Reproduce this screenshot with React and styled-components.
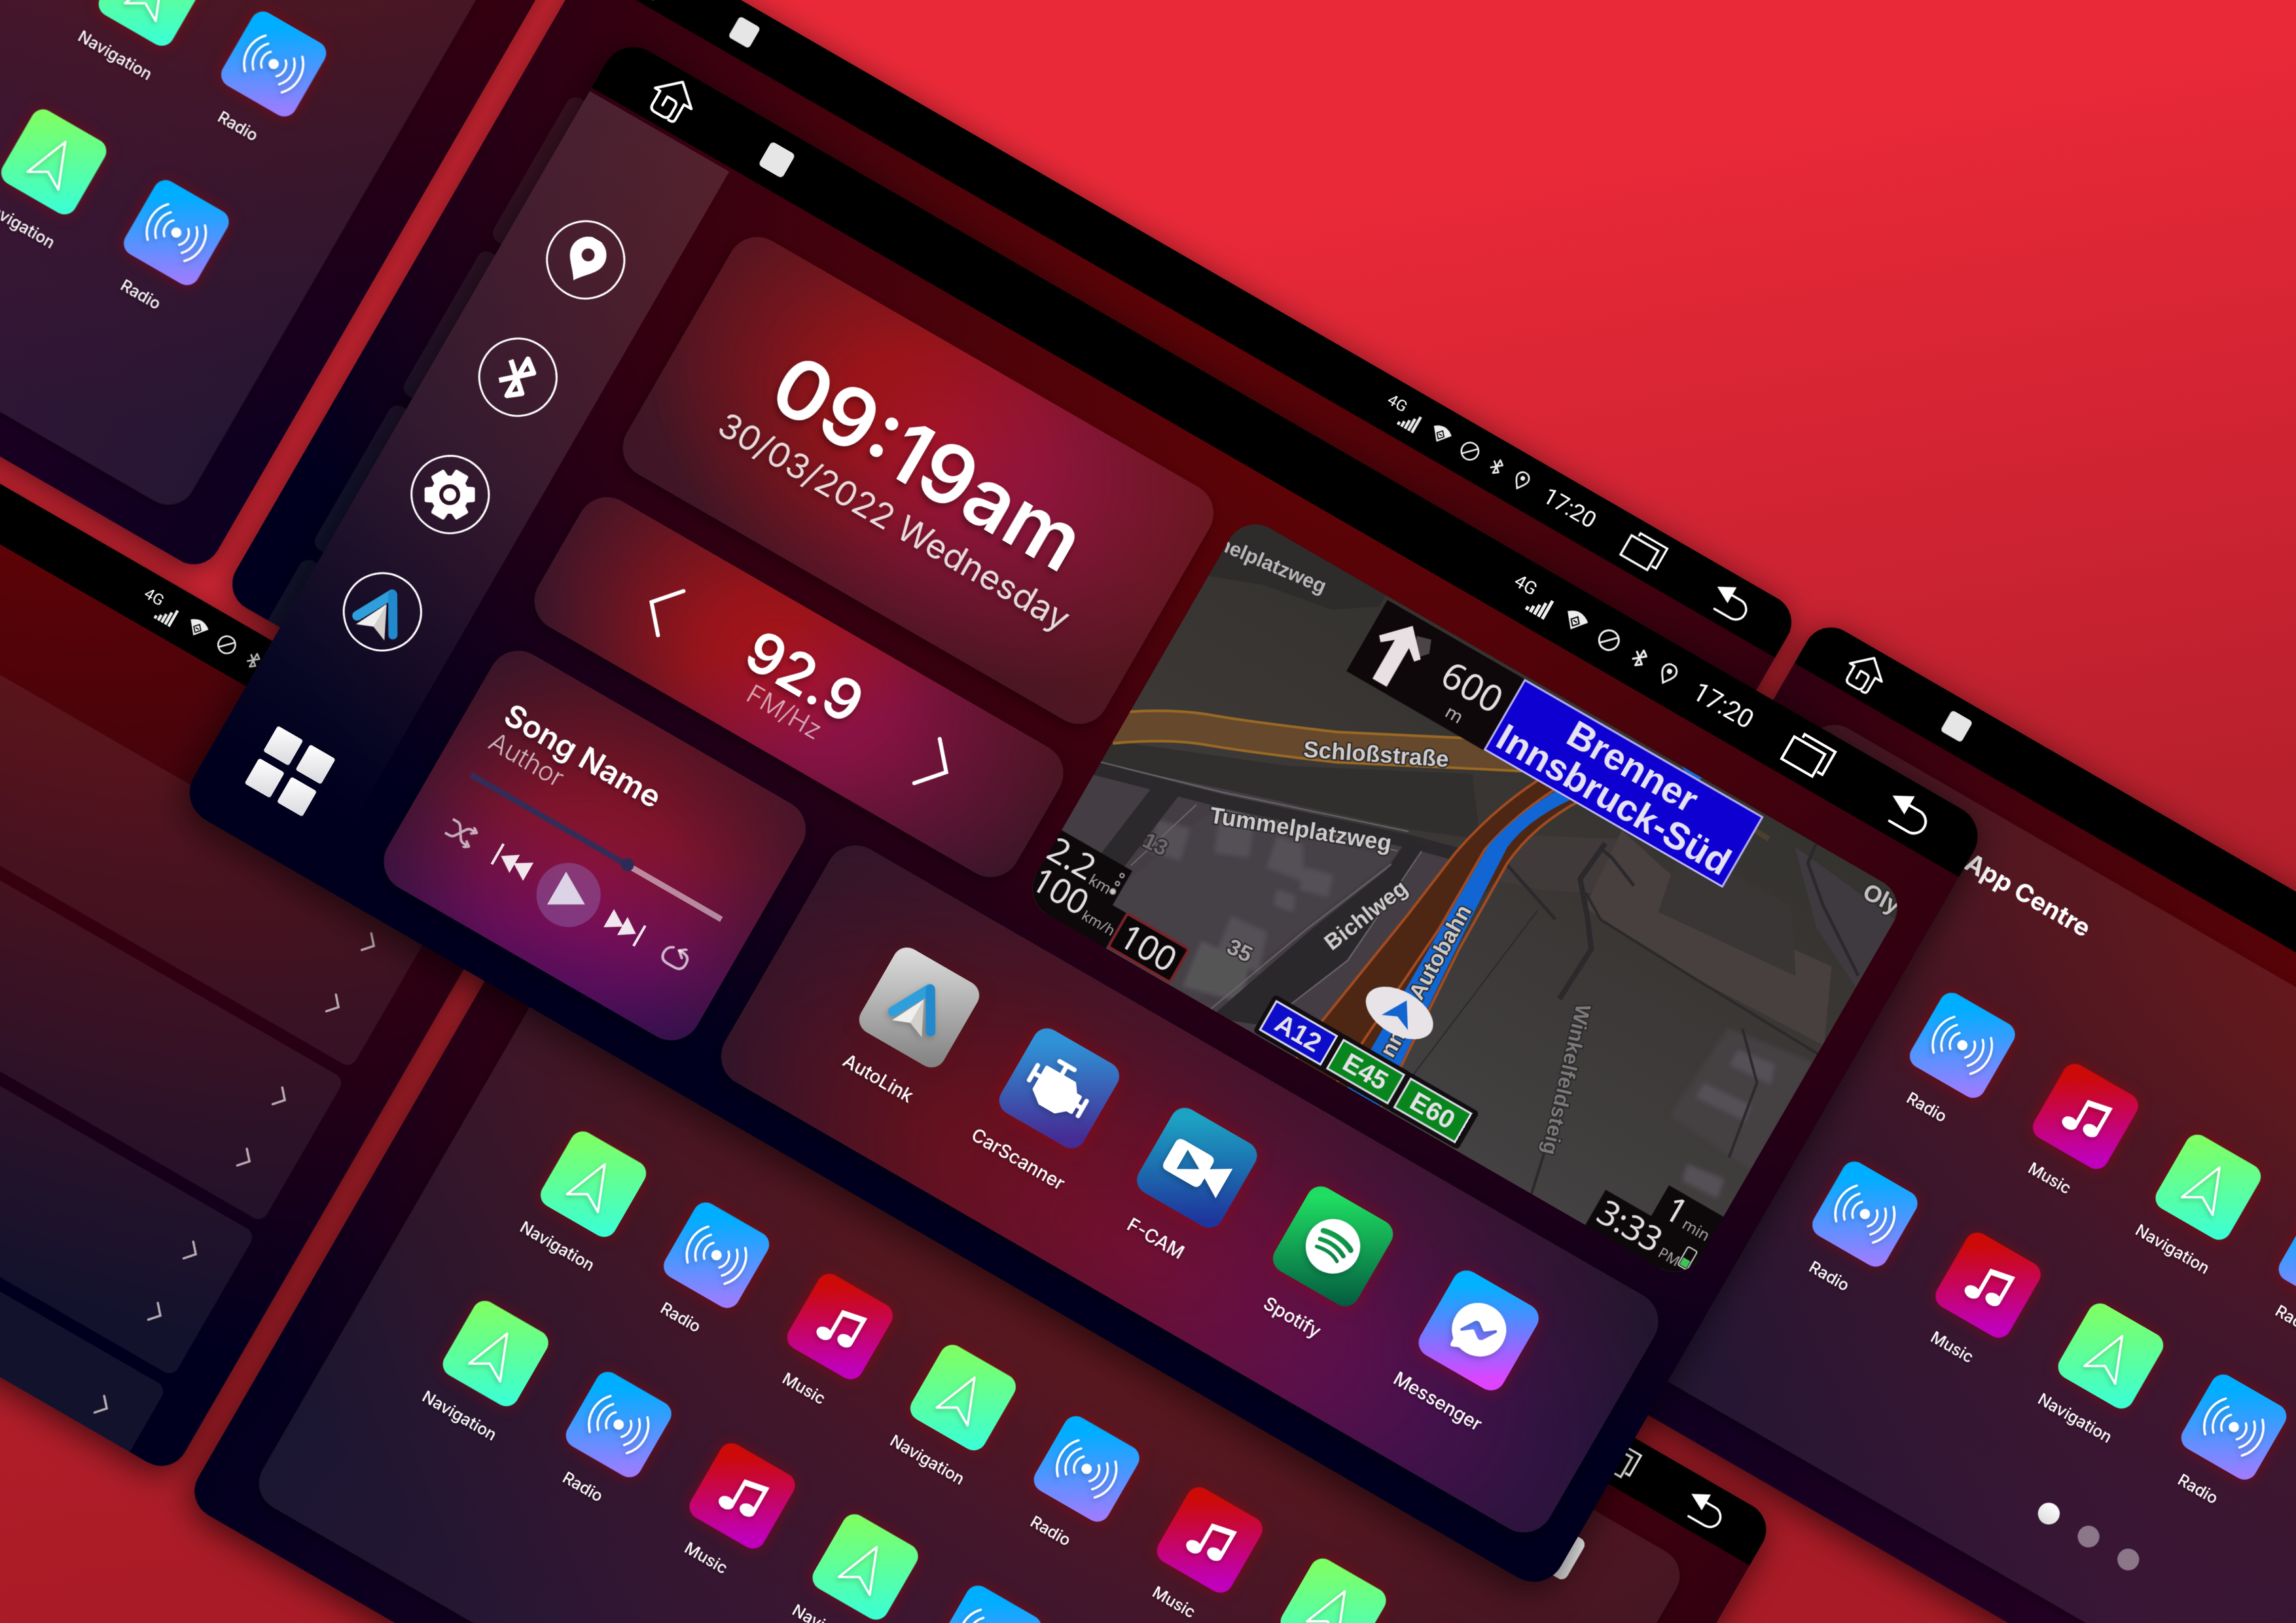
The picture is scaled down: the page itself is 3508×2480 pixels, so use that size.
import React, { useState } from "react";
import styled, { createGlobalStyle, css } from "styled-components";
import { FaSpotify, FaFacebookMessenger } from "react-icons/fa";

const GlobalStyle = createGlobalStyle`
  *, *::before, *::after { box-sizing: border-box; }
  body { margin: 0; background: #a91b26; }
  button { border: 0; padding: 0; background: none; color: inherit; font: inherit; cursor: pointer; }
  h1, h2, p, ul { margin: 0; padding: 0; list-style: none; font: inherit; }
  svg { display: block; }
`;

/* ---------- stage ---------- */

const Page = styled.main`
  position: relative;
  width: 100%;
  min-height: 100vh;
  overflow: hidden;
  background: linear-gradient(170deg, #ea2938 20%, #ce2332 43%, #b8202c 58%, #a91b26 80%);
  font-family: Inter, "Open Sans", sans-serif;
  color: #fff;
`;

const Stage = styled.div`
  position: absolute;
  top: 0;
  left: 0;
  transform: rotate(30deg);
  transform-origin: 0 0;
`;

const Device = styled.section`
  position: absolute;
  left: ${(p) => p.$x}px;
  top: ${(p) => p.$y}px;
  width: 2412px;
  height: 1356px;
  transform: scale(${(p) => p.$scale || 1});
  transform-origin: 0 0;
  display: flex;
  flex-direction: column;
  overflow: hidden;
  border-radius: 48px;
  background: ${(p) =>
      p.$violet
        ? "radial-gradient(ellipse 62% 66% at 58% 92%, rgba(54, 0, 36, 0.72), rgba(54, 0, 36, 0.4) 50%, transparent),"
        : ""}
    radial-gradient(ellipse 96% 100% at 52% 0%, #620304 0%, #4c030a 26%, #340010 50%, #200017 68%, #00001e 96%);
  box-shadow: 0 12px 56px rgba(0, 0, 0, 0.62);
`;

/* ---------- status bar ---------- */

const Bar = styled.header`
  flex: none;
  height: 92px;
  padding: 0 82px 0 80px;
  display: flex;
  align-items: center;
  background: #000;
`;

const BarSquare = styled.button`
  width: 42px;
  height: 42px;
  margin-left: 127px;
  border-radius: 6px;
  background: #e6e6e6;
`;

const Indicators = styled.div`
  margin-left: auto;
  display: flex;
  align-items: center;
  gap: 24px;
`;

const Signal = styled.div`
  display: flex;
  align-items: flex-end;
`;

const Network = styled.span`
  font: 28px/28px Roboto, sans-serif;
  padding-bottom: 18px;
`;

const Time = styled.time`
  padding-left: 10px;
  font: 40px/46px Roboto, sans-serif;
`;

const Recents = styled.button`
  margin-left: 66px;
`;

const Back = styled.button`
  margin-left: 107px;
`;

function StatusBar() {
  return (
    <Bar>
      <button aria-label="Home">
        <svg width="72" height="68" viewBox="0 0 72 68" fill="none" stroke="#fff" strokeWidth="4" strokeLinejoin="round" strokeLinecap="round">
          <path d="M46 64h3q6 0 6-6V32h13L36 3 4 32h9v23q0 9 9 9h14q9 0 9-9V41q0-7-7-7H27v15" />
        </svg>
      </button>
      <BarSquare aria-label="Stop" />
      <Indicators>
        <Signal>
          <Network>4G</Network>
          <svg width="34" height="32" viewBox="0 0 34 32" fill="#eee">
            <path d="M0 32v-6h5v6zM7 32V21h5v11zM14 32V15h5v17zM21 32V8h5v24zM28 32V0h5v32z" />
          </svg>
        </Signal>
        <svg width="36" height="30" viewBox="0 0 36 30">
          <path d="M0 8Q18-7 36 8L18 30z" fill="#eee" />
          <path d="M18 8l7 8-7 8-7-8z" fill="none" stroke="#000" strokeWidth="2" />
          <path d="M15 16h6" stroke="#000" strokeWidth="2" />
        </svg>
        <svg width="34" height="34" viewBox="0 0 34 34" fill="none" stroke="#eee" strokeWidth="3">
          <circle cx="17" cy="17" r="15" />
          <path d="M7 27L27 7" />
        </svg>
        <svg width="26" height="30" viewBox="0 0 26 30" fill="none" stroke="#eee" strokeWidth="3" strokeLinejoin="round">
          <path d="M4 8l17 14-8 6V2l8 6L4 22" />
        </svg>
        <svg width="26" height="34" viewBox="0 0 26 34" fill="none" stroke="#eee" strokeWidth="3">
          <path d="M13 32C8 24 2 19 2 12a11 11 0 0 1 22 0c0 7-6 12-11 20z" />
          <circle cx="13" cy="12" r="4" fill="#eee" stroke="none" />
        </svg>
        <Time>17:20</Time>
      </Indicators>
      <Recents aria-label="Recent apps">
        <svg width="70" height="54" viewBox="0 0 70 54" fill="none" stroke="#fff" strokeWidth="4">
          <path d="M2 13h54v39H2zM14 8V2h54v40h-9" />
        </svg>
      </Recents>
      <Back aria-label="Back">
        <svg width="68" height="56" viewBox="0 0 68 56">
          <path d="M28 17h20a18 18 0 0 1 0 36H15" fill="none" stroke="#fff" strokeWidth="4" strokeLinecap="round" />
          <path d="M0 17L30 1v32z" fill="#fff" />
        </svg>
      </Back>
    </Bar>
  );
}

/* ---------- app tiles ---------- */

const TILE_FILLS = {
  navigation: "linear-gradient(150deg, #7dff66 10%, #3cffd2 92%)",
  radio: "linear-gradient(150deg, #00aeff 18%, #9c7dff 92%)",
  music: "linear-gradient(150deg, #cc0a08 15%, #c000ba 88%)",
  autolink: "linear-gradient(150deg, #dcdcdc 5%, #858585 92%)",
  carscanner: "linear-gradient(150deg, #2f92d6 15%, #452c94 88%)",
  fcam: "linear-gradient(150deg, #1ca2c2 12%, #1e369c 90%)",
  spotify: "linear-gradient(150deg, #1fdd62 12%, #045c40 95%)",
  messenger: "linear-gradient(150deg, #00b2ff 15%, #dd44ff 88%)",
};

const Tile = styled.button`
  display: flex;
  flex-direction: column;
  align-items: center;
  gap: 34px;
  font-size: 28px;
  font-weight: 500;
  line-height: 36px;
  text-shadow: 0 2px 4px rgba(0, 0, 0, 0.4);
`;

const TileFace = styled.span`
  width: 146px;
  height: 146px;
  display: grid;
  place-items: center;
  border-radius: 22px;
  background: ${(p) => TILE_FILLS[p.$kind]};
  box-shadow: 0 0 24px ${(p) => (p.$kind === "autolink" ? "rgba(90, 20, 20, 0.4)" : "rgba(180, 0, 0, 0.42)")};
  svg { filter: drop-shadow(0 4px 4px rgba(0, 0, 0, 0.22)); overflow: visible; }
`;

function AutoLinkMark({ size }) {
  return (
    <svg width={size} height={size} viewBox="-45 -45 90 90">
      <path d="M-30 24L0-31" stroke="#2f9fdc" strokeWidth="15" strokeLinecap="round" />
      <path d="M1-31L32 22" stroke="#2189cc" strokeWidth="14" strokeLinecap="round" />
      <path d="M0-14L-25 36 0 26z" fill="#efefee" />
      <path d="M0-14L25 36 0 26z" fill="#d3cfcb" />
    </svg>
  );
}

function Glyph({ kind }) {
  switch (kind) {
    case "navigation":
      return (
        <svg width="90" height="90" viewBox="-45 -45 90 90" fill="none" stroke="#fff" strokeWidth="4" strokeLinejoin="round">
          <path d="M0-40L31 38 0 20-31 38z" />
        </svg>
      );
    case "radio":
      return (
        <svg width="120" height="90" viewBox="-60 -45 120 90" fill="none" stroke="#fff" strokeWidth="4" strokeLinecap="round">
          <circle r="9" fill="#fff" stroke="none" />
          <path d="M-15 16a22 22 0 0 1 0-32M-26 26a37 37 0 0 1 0-52M-37 36a52 52 0 0 1 0-72M15-16a22 22 0 0 1 0 32M26-26a37 37 0 0 1 0 52M37-36a52 52 0 0 1 0 72" />
        </svg>
      );
    case "music":
      return (
        <svg width="90" height="90" viewBox="-45 -45 90 90" fill="#fff">
          <ellipse cx="-18" cy="24" rx="14" ry="11" />
          <ellipse cx="20" cy="17" rx="14" ry="11" />
          <path d="M-11-27l45-9v52h-7v-40l-31 6v44h-7z" />
        </svg>
      );
    case "autolink":
      return <AutoLinkMark size={94} />;
    case "carscanner":
      return (
        <svg width="100" height="80" viewBox="0 0 100 80" fill="#fff" stroke="#fff" strokeLinejoin="round" strokeLinecap="round">
          <path strokeWidth="6" d="M18 22h48l10 14h8v26h-8L62 74H36L18 60z" />
          <path fill="none" strokeWidth="7" d="M30 4h26M43 4v14M4 26v26M4 39h14M96 36v26M84 49h12" />
        </svg>
      );
    case "fcam":
      return (
        <svg width="100" height="70" viewBox="0 0 100 70" fill="#fff">
          <path fillRule="evenodd" d="M12 8h46q10 0 10 10v9l30-18v52L68 43v9q0 10-10 10H12Q2 62 2 52V18Q2 8 12 8zM24 18v34l30-17z" />
        </svg>
      );
    case "spotify":
      return <FaSpotify size={86} />;
    default:
      return <FaFacebookMessenger size={86} />;
  }
}

function AppTile({ kind, label }) {
  return (
    <Tile>
      <TileFace $kind={kind}>
        <Glyph kind={kind} />
      </TileFace>
      {label}
    </Tile>
  );
}

/* ---------- app centre screen ---------- */

const Panel = styled.div`
  flex: 1;
  margin: 52px 90px 68px;
  padding: 54px 126px 0;
  border-radius: 48px;
  background: rgba(255, 255, 255, 0.085);
  box-shadow: 0 6px 14px rgba(0, 0, 0, 0.3);
`;

const PanelHead = styled.div`
  height: 80px;
  padding: 0 49px 0 217px;
  display: flex;
  align-items: center;
  justify-content: space-between;
`;

const PanelTitle = styled.h2`
  font-size: 44px;
  font-weight: 700;
`;

const PanelAction = styled.button`
  width: 80px;
  height: 80px;
  border-radius: 12px;
  background: linear-gradient(#fff, #d8d4d6);
`;

const AppGrid = styled.div`
  margin-top: 172px;
  display: grid;
  grid-template-columns: repeat(8, 1fr);
  row-gap: 124px;
`;

const Dots = styled.div`
  margin-top: 130px;
  display: flex;
  justify-content: center;
  gap: 42px;
`;

const Dot = styled.button`
  width: 38px;
  height: 38px;
  border-radius: 50%;
  background: ${(p) => (p.$active ? "linear-gradient(#fff, #dcdcdc)" : "rgba(255, 255, 255, 0.42)")};
`;

const NAV = { kind: "navigation", label: "Navigation" };
const RADIO = { kind: "radio", label: "Radio" };
const MUSIC = { kind: "music", label: "Music" };

function AppCentre({ apps, ...place }) {
  return (
    <Device $violet {...place}>
      <StatusBar />
      <Panel>
        <PanelHead>
          <PanelTitle>App Centre</PanelTitle>
          <PanelAction aria-label="Edit" />
        </PanelHead>
        <AppGrid>
          {[...apps, ...apps].map((a, i) => (
            <AppTile key={i} {...a} />
          ))}
        </AppGrid>
        <Dots>
          <Dot $active aria-label="Page 1" />
          <Dot aria-label="Page 2" />
          <Dot aria-label="Page 3" />
        </Dots>
      </Panel>
    </Device>
  );
}

/* ---------- settings list screen ---------- */

const Groups = styled.div`
  padding: 198px 84px 0 92px;
  display: flex;
  flex-direction: column;
  gap: 22px;
`;

const Group = styled.div`
  flex: none;
  height: 290px;
  padding: 22px 70px;
  border-radius: 18px;
  background: rgba(255, 255, 255, 0.07);
`;

const SettingRow = styled.button`
  width: 100%;
  height: 124px;
  display: flex;
  align-items: center;
  justify-content: flex-end;
`;

function SettingsScreen(place) {
  return (
    <Device {...place}>
      <StatusBar />
      <Groups>
        {[0, 1, 2, 3].map((g) => (
          <Group key={g}>
            {[0, 1].map((r) => (
              <SettingRow key={r} aria-label="Open setting">
                <svg width="20" height="38" viewBox="0 0 20 38" fill="none" stroke="#b9adb3" strokeWidth="4" strokeLinecap="round">
                  <path d="M2 2l15 17L2 36" />
                </svg>
              </SettingRow>
            ))}
          </Group>
        ))}
      </Groups>
    </Device>
  );
}

/* ---------- home screen ---------- */

const Body = styled.div`
  flex: 1;
  display: flex;
  min-height: 0;
`;

const Sidebar = styled.nav`
  flex: none;
  width: 246px;
  margin-top: 6px;
  padding-top: 166px;
  display: flex;
  flex-direction: column;
  align-items: center;
  gap: 86px;
  background: linear-gradient(rgba(255, 255, 255, 0.13), rgba(255, 255, 255, 0.1) 45%, rgba(255, 255, 255, 0) 92%);
`;

const RoundButton = styled.button`
  width: 121px;
  height: 121px;
  display: grid;
  place-items: center;
  border: 3px solid #fff;
  border-radius: 50%;
`;

const AllApps = styled.button`
  margin-top: 84px;
  display: grid;
  grid-template-columns: 45px 45px;
  gap: 12px;
`;

const AppsCell = styled.span`
  height: 45px;
  border-radius: 4px;
  background: linear-gradient(150deg, #fff, #d9d9de);
`;

const Content = styled.div`
  flex: 1;
  padding: 65px 52px 58px 64px;
  display: flex;
  flex-direction: column;
  gap: 49px;
`;

const Upper = styled.div`
  flex: 681;
  display: grid;
  grid-template-columns: 844fr 1172fr;
  grid-template-rows: 411fr 222fr;
  gap: 48px 35px;
`;

const Lower = styled.div`
  flex: 411;
  display: flex;
  gap: 49px;
`;

const Card = styled.section`
  position: relative;
  overflow: hidden;
  border-radius: 46px;
  background: rgba(255, 255, 255, 0.085);
  box-shadow: 0 8px 16px rgba(0, 0, 0, 0.32);
  &::before {
    content: "";
    position: absolute;
    inset: 0;
    background: ${(p) => p.$glow};
    mask-image: radial-gradient(ellipse ${(p) => p.$reach}, #000, rgba(0, 0, 0, 0.8) 35%, rgba(0, 0, 0, 0.34) 70%, transparent);
  }
  > * { position: relative; }
`;

const ClockCard = styled(Card)`
  padding-top: 12px;
  display: flex;
  flex-direction: column;
  align-items: center;
  justify-content: center;
  gap: 12px;
`;

const Clock = styled.time`
  font-size: 126px;
  font-weight: 600;
  line-height: 120px;
  text-shadow: 0 6px 10px rgba(0, 0, 0, 0.35);
`;

const DateLine = styled.p`
  font-size: 53px;
  line-height: 64px;
  color: rgba(255, 255, 255, 0.85);
  text-shadow: 0 4px 8px rgba(0, 0, 0, 0.3);
`;

const RadioCard = styled(Card)`
  display: flex;
  align-items: center;
  justify-content: center;
`;

const Station = styled.div`
  width: 444px;
  padding-top: 8px;
  text-align: center;
`;

const Frequency = styled.p`
  font-size: 86px;
  font-weight: 600;
  line-height: 80px;
  text-shadow: 0 5px 8px rgba(0, 0, 0, 0.35);
`;

const Band = styled.p`
  font-size: 40px;
  font-weight: 300;
  line-height: 44px;
  opacity: 0.65;
`;

const MusicCard = styled(Card)`
  flex: none;
  width: 546px;
  padding: 70px 49px 0 55px;
  display: flex;
  flex-direction: column;
`;

const SongName = styled.h2`
  font-size: 48px;
  font-weight: 600;
  line-height: 52px;
  text-shadow: 0 4px 6px rgba(0, 0, 0, 0.3);
`;

const Author = styled.p`
  font-size: 40px;
  font-weight: 300;
  line-height: 44px;
  opacity: 0.7;
`;

const thumb = css`
  width: 20px;
  height: 20px;
  border: 0;
  border-radius: 50%;
  background: #2d2b55;
`;

const Progress = styled.input`
  appearance: none;
  width: 100%;
  height: 20px;
  margin: 30px 0 26px;
  background: linear-gradient(
      to right,
      #352b57 ${(p) => p.value}%,
      rgba(255, 255, 255, 0.5) ${(p) => p.value}%
    )
    center / 100% 9px no-repeat;
  &::-webkit-slider-thumb { appearance: none; ${thumb} }
  &::-moz-range-thumb { ${thumb} }
`;

const Controls = styled.div`
  padding: 0 10px;
  display: flex;
  align-items: center;
  justify-content: space-between;
`;

const Transport = styled.div`
  display: flex;
  align-items: center;
  gap: 22px;
`;

const Play = styled.button`
  width: 98px;
  height: 98px;
  display: grid;
  place-items: center;
  border-radius: 50%;
  background: rgba(140, 90, 160, 0.55);
`;

const Dock = styled(Card)`
  flex: 1;
  padding: 99px 102px 0 108px;
  display: grid;
  grid-template-columns: 246fr 248fr 238fr 244fr 270fr;
  align-items: start;
`;

const MapCard = styled.section`
  grid-column: 2;
  grid-row: 1 / 3;
  overflow: hidden;
  border-radius: 46px;
  background: #3a3838;
`;

const DOCK_APPS = [
  { kind: "autolink", label: "AutoLink" },
  { kind: "carscanner", label: "CarScanner" },
  { kind: "fcam", label: "F-CAM" },
  { kind: "spotify", label: "Spotify" },
  { kind: "messenger", label: "Messenger" },
];

function Chevron({ flip }) {
  return (
    <svg width="42" height="84" viewBox="0 0 42 84" fill="none" stroke="#fff" strokeWidth="6" strokeLinecap="round">
      <path d={flip ? "M38 3L4 42l34 39" : "M4 3l34 39L4 81"} />
    </svg>
  );
}

/* Outline of the settings cog: six teeth around a disc. */
const COG = Array.from({ length: 6 }, (_, i) => {
  const at = (deg, r) => {
    const a = ((i * 60 + deg) * Math.PI) / 180;
    return `${(Math.sin(a) * r).toFixed(1)} ${(-Math.cos(a) * r).toFixed(1)}`;
  };
  return `${at(-21, 27)}L${at(-14, 37)}L${at(14, 37)}L${at(21, 27)}`;
}).join("L");

const sans = '"Liberation Sans", Arial, sans-serif';
const hud = '"Noto Sans", "Open Sans", sans-serif';

function RoadName({ x, y, turn, size = 34, fill = "#cfccce", anchor, children }) {
  return (
    <text
      transform={`translate(${x} ${y}) rotate(${turn})`}
      fontFamily={sans}
      fontWeight="700"
      fontSize={size}
      fill={fill}
      textAnchor={anchor}
      stroke="#2a2829"
      strokeWidth="4"
      paintOrder="stroke"
    >
      {children}
    </text>
  );
}

function HudText({ x, y, size, fill = "#e4dfe2", children }) {
  return (
    <text x={x} y={y} fontFamily={hud} fontSize={size} fill={fill}>
      {children}
    </text>
  );
}

function RoadShield({ x, fill, children }) {
  return (
    <g>
      <rect x={x - 8} y="610" width="124" height="66" rx="6" fill="#120d10" />
      <rect x={x} y="618" width="106" height="50" fill={fill} stroke="#e2e0ee" strokeWidth="3" />
      <text x={x + 53} y="657" fontFamily={sans} fontWeight="700" fontSize="40" textAnchor="middle" fill="#e6e2ea">
        {children}
      </text>
    </g>
  );
}

function MapView() {
  return (
    <svg width="100%" height="100%" viewBox="0 0 1170 678" preserveAspectRatio="xMidYMid slice">
      <defs>
        <linearGradient id="ground" x1="0" y1="0" x2="0" y2="1">
          <stop offset="0" stopColor="#35332f" />
          <stop offset=".35" stopColor="#393634" />
          <stop offset="1" stopColor="#434141" />
        </linearGradient>
        <filter id="soft"><feGaussianBlur stdDeviation="3" /></filter>
      </defs>
      <rect width="1170" height="678" fill="url(#ground)" />
      <path d="M0 0h250v20l-60 40L80 80 0 110z" fill="#2e2c2b" />
      <path d="M0 430l180-60 280-60 80-20 0 388H0z" fill="#443e44" />
      <path d="M180 425l280-85-90 220-60 118H90z" fill="#464047" />
      <path d="M0 400L250 300 500 170l60 80-100 40-280 90L0 440z" fill="#302f2d" />
      <path d="M560 240l190-100 90 10-40 60-120 60-60 20z" fill="#413a3a" />
      <path d="M740 130l180 40 200-20 50 110-230 10-190-10z" fill="#48403e" />
      <path d="M830 110l190-10 60 90-230 20z" fill="#3a3635" />
      <path d="M980 20l190 20v120l-100-50z" fill="#3f3a3f" />
      <path d="M1030 310l140-20v190l-150-10z" fill="#444043" filter="url(#soft)" />
      <g fill="#544f57" filter="url(#soft)">
        <path d="M200 420l50-20 20 50-50 20zM290 400l40-10 30 50-60 10zM120 470l50-14 12 50-48 12zM350 420l44-12 10 34-44 12zM290 540l60-6 20 60-70 10zM1060 330l60-8 10 30-70 6zM1040 400l80-6 4 26-84 6zM1080 520l60-8 6 30-60 4zM330 470l30-6 10 24-32 6z" />
        <path d="M270 596l80-10 20 60-90 24z" fill="#565456" />
      </g>
      <g fill="none" stroke="#2b292c">
        <path d="M-10 452L190 396 470 306l90-24" strokeWidth="20" />
        <path d="M110 420L90 570" strokeWidth="40" />
        <path d="M728 160l-6 66 38 44 30 40-4 90" strokeWidth="8" />
        <path d="M726 170l22 4 50 20M600 258l60 20 60 20" strokeWidth="5" />
        <path d="M740 240l40 24 170 6 230 6" strokeWidth="4" />
        <path d="M1006 0l4 32 52 44 100 66" strokeWidth="5" />
        <path d="M880 600l20 90M1050 300l60 60 20 120" strokeWidth="4" />
        <path d="M690 300L650 620" strokeWidth="2" />
      </g>
      <path d="M340 690l76-30 60-150 18-210-30 8-4 54-52 130z" fill="#2a282b" />
      <g fill="none" stroke="#6a666b" strokeWidth="2">
        <path d="M-10 440L184 384 460 294M160 420l-40 130M180 412l280-84M330 690l70-190 62-150" />
        <path d="M416 660l62-150 14-200" />
      </g>
      <path d="M-10 384Q60 334 120 312T300 238L560 104" fill="none" stroke="#9a6a24" strokeWidth="50" />
      <path d="M-10 384Q60 334 120 312T300 238L560 104" fill="none" stroke="#66482c" strokeWidth="42" />
      <path d="M640 60Q760 20 940 30" fill="none" stroke="#4d3f30" strokeWidth="8" />

      <path d="M486 690l6-80 30-204 16-120Q556 190 600 110l60 10Q610 200 612 290l-16 110-20 290z" fill="#4d2614" />
      <g fill="none" stroke="#a34b20" strokeWidth="4">
        <path d="M484 690l6-80 32-204 16-120Q556 190 604 104" />
        <path d="M556 690l4-90 14-200 0-140Q590 180 630 110" />
        <path d="M634 690l-6-90-12-190-2-150Q620 190 664 120" />
      </g>
      <path d="M574 690l2-90 0-230 0-120Q590 180 640 100l26 6Q608 180 602 240l6 120 18 240 4 90z" fill="#1166d4" />
      <path d="M770 0h36l-8 16z" fill="#1166d4" />

      <RoadName x={166} y={46} turn={-7} size={31} anchor="end" fill="#bcb9ba">Tummelplatzweg</RoadName>
      <RoadName x={264} y={276} turn={-26} size={35}>Schloßstraße</RoadName>
      <RoadName x={190} y={434} turn={-21} size={35}>Tummelplatzweg</RoadName>
      <RoadName x={450} y={510} turn={-68}>Bichlweg</RoadName>
      <RoadName x={606} y={508} turn={-91}>Autobahn</RoadName>
      <RoadName x={612} y={606} turn={-91}>nn</RoadName>
      <RoadName x={812} y={392} turn={73} size={32} fill="#7d7a7b">Winkelfeldsteig</RoadName>
      <RoadName x={1106} y={36} turn={-3} size={36} fill="#c4c1c3">Olympiastraße</RoadName>
      <RoadName x={118} y={516} turn={-4} size={34} fill="#6e696f">13</RoadName>
      <RoadName x={310} y={592} turn={-4} size={34} fill="#aaa6aa">35</RoadName>

      <ellipse cx="586" cy="540" rx="56" ry="33" fill="#e7e3e7" />
      <path d="M586 518l24 38-24-10-22 10z" fill="#1464d0" />

      <rect x="256" y="5" width="242" height="125" fill="#0f080b" />
      <path d="M322 30l22-6 8 20-18 20z" fill="#4a4446" />
      <path d="M309 20l36 38-7 8-17-14v68h-25V52l-17 14-7-8z" fill="#e9e0e4" />
      <HudText x={386} y={76} size={56}>600</HudText>
      <HudText x={418} y={114} size={28} fill="#bdb6ba">m</HudText>
      <rect x="498" y="6" width="417" height="122" fill="#0f00d2" stroke="#b9b4ee" strokeWidth="3" />
      <g fontFamily={sans} fontWeight="700" fontSize="57" fill="#e6e2f2" textAnchor="middle">
        <text x="706" y="58">Brenner</text>
        <text x="706" y="115">Innsbruck-Süd</text>
      </g>

      <path d="M0 556h126v60h24v62H0z" fill="#0d090b" />
      <HudText x={0} y={604} size={52}>2.2</HudText>
      <HudText x={76} y={606} size={24} fill="#a8a2a6">km</HudText>
      <g fill="none" stroke="#a8a2a6" strokeWidth="2">
        <circle cx="116" cy="570" r="3" />
        <circle cx="116" cy="584" r="3" />
        <circle cx="116" cy="598" r="4" fill="#cfcacd" />
      </g>
      <HudText x={2} y={656} size={52}>100</HudText>
      <HudText x={94} y={658} size={22} fill="#a8a2a6">km/h</HudText>
      <rect x="152" y="616" width="108" height="58" rx="4" fill="#0b0708" stroke="#7c2229" strokeWidth="4" />
      <HudText x={161} y={664} size={52}>100</HudText>

      <RoadShield x={415} fill="#0d0cc8">A12</RoadShield>
      <RoadShield x={533} fill="#08851c">E45</RoadShield>
      <RoadShield x={651} fill="#08851c">E60</RoadShield>

      <path d="M1072 562h98v116H992v-62h80z" fill="#0d090b" />
      <HudText x={1086} y={608} size={52}>1</HudText>
      <HudText x={1120} y={608} size={24} fill="#a8a2a6">min</HudText>
      <HudText x={1000} y={664} size={52}>3:33</HudText>
      <HudText x={1110} y={664} size={22} fill="#a8a2a6">PM</HudText>
      <rect x="1144" y="628" width="16" height="32" rx="3" fill="none" stroke="#cfcacd" strokeWidth="2" />
      <rect x="1146" y="646" width="12" height="12" fill="#3ec45a" />
    </svg>
  );
}

function Player() {
  const [position, setPosition] = useState(63);
  return (
    <MusicCard
      $glow="linear-gradient(165deg, #8c121a 12%, #92142e 45%, #7a0e5e 76%, #5a0c66 96%)"
      $reach="84% 106% at 54% 66%"
    >
      <SongName>Song Name</SongName>
      <Author>Author</Author>
      <Progress
        type="range"
        aria-label="Song position"
        value={position}
        onChange={(e) => setPosition(Number(e.target.value))}
      />
      <Controls>
        <button aria-label="Shuffle">
          <svg width="44" height="36" viewBox="0 0 44 36" fill="none" stroke="#fff" strokeOpacity=".65" strokeWidth="4">
            <path d="M0 6h8q5 0 8 5l9 14q3 5 8 5h5M0 30h8q5 0 8-5l9-14q3-5 8-5h5" />
            <path d="M34 0l8 6-8 6M34 24l8 6-8 6" />
          </svg>
        </button>
        <Transport>
          <button aria-label="Previous">
            <svg width="56" height="36" viewBox="0 0 56 36" fill="#fff" fillOpacity=".9">
              <path d="M0 0h4v36H0zM8 18L32 2v32zM30 18L56 2v32z" />
            </svg>
          </button>
          <Play aria-label="Play">
            <svg width="58" height="60" viewBox="0 0 58 60" fill="#dcd4e6">
              <path d="M8 1l50 29-50 29z" />
            </svg>
          </Play>
          <button aria-label="Next">
            <svg width="56" height="36" viewBox="0 0 56 36" fill="#fff" fillOpacity=".9">
              <path d="M52 0h4v36h-4zM48 18L24 2v32zM26 18L0 2v32z" />
            </svg>
          </button>
        </Transport>
        <button aria-label="Repeat">
          <svg width="44" height="38" viewBox="0 0 44 38" fill="none" stroke="#fff" strokeOpacity=".7" strokeWidth="4" strokeLinecap="round">
            <path d="M12 8Q3 12 3 21q0 13 13 13h12q13 0 13-13T28 8h-6" />
            <path d="M31 1l-9 7 9 8" />
          </svg>
        </button>
      </Controls>
    </MusicCard>
  );
}

function HomeScreen(place) {
  return (
    <Device {...place}>
      <StatusBar />
      <Body>
        <Sidebar>
          <RoundButton aria-label="Location">
            <svg width="58" height="72" viewBox="0 0 58 72" fill="#fff">
              <path fillRule="evenodd" d="M29 72C20 56 1 45 1 27a28 28 0 0 1 56 0c0 18-19 29-28 45zM29 17a10 10 0 1 0 0 20 10 10 0 0 0 0-20z" />
            </svg>
          </RoundButton>
          <RoundButton aria-label="Bluetooth">
            <svg width="56" height="72" viewBox="0 0 56 72" fill="none" stroke="#fff" strokeWidth="8" strokeLinejoin="round">
              <path d="M6 18l40 36-18 14V4l18 14L6 54" />
            </svg>
          </RoundButton>
          <RoundButton aria-label="Settings">
            <svg width="84" height="84" viewBox="-42 -42 84 84">
              <path d={`M${COG}z`} fill="#fff" stroke="#fff" strokeWidth="5" strokeLinejoin="round" />
              <circle r="13" fill="#fff" stroke="#2d1023" strokeWidth="6" />
            </svg>
          </RoundButton>
          <RoundButton aria-label="AutoLink">
            <AutoLinkMark size={90} />
          </RoundButton>
          <AllApps aria-label="All apps">
            <AppsCell />
            <AppsCell />
            <AppsCell />
            <AppsCell />
          </AllApps>
        </Sidebar>
        <Content>
          <Upper>
            <ClockCard
              $glow="linear-gradient(105deg, #a81418 34%, #9a1444 66%)"
              $reach="58% 82% at 50% 30%"
            >
              <Clock>09:19am</Clock>
              <DateLine>30/03/2022 Wednesday</DateLine>
            </ClockCard>
            <MapCard aria-label="Navigation map">
              <MapView />
            </MapCard>
            <RadioCard
              $glow="linear-gradient(125deg, #ac1418 38%, #98124a 62%)"
              $reach="54% 150% at 48% 44%"
            >
              <button aria-label="Previous station">
                <Chevron flip />
              </button>
              <Station>
                <Frequency>92.9</Frequency>
                <Band>FM/Hz</Band>
              </Station>
              <button aria-label="Next station">
                <Chevron />
              </button>
            </RadioCard>
          </Upper>
          <Lower>
            <Player />
            <Dock
              $glow="linear-gradient(100deg, #7a1018 24%, #701032 50%, #6a0e60 84%)"
              $reach="66% 112% at 49% 80%"
            >
              {DOCK_APPS.map((a) => (
                <AppTile key={a.kind} {...a} />
              ))}
            </Dock>
          </Lower>
        </Content>
      </Body>
    </Device>
  );
}

export default function App() {
  return (
    <>
      <GlobalStyle />
      <Page>
        <Stage>
          <AppCentre
            $x={-1402}
            $y={-582}
            $scale={0.875}
            apps={[RADIO, MUSIC, NAV, RADIO, MUSIC, RADIO, NAV, RADIO]}
          />
          <SettingsScreen $x={748} $y={-566} $scale={0.872} />
          <AppCentre
            $x={2881}
            $y={-574}
            $scale={0.876}
            apps={[NAV, RADIO, MUSIC, NAV, RADIO, MUSIC, NAV, RADIO]}
          />
          <SettingsScreen $x={-749} $y={640} $scale={0.872} />
          <AppCentre
            $x={1391}
            $y={654}
            $scale={0.879}
            apps={[NAV, RADIO, MUSIC, NAV, RADIO, MUSIC, NAV, RADIO]}
          />
          <HomeScreen $x={850} $y={-428} />
        </Stage>
      </Page>
    </>
  );
}
